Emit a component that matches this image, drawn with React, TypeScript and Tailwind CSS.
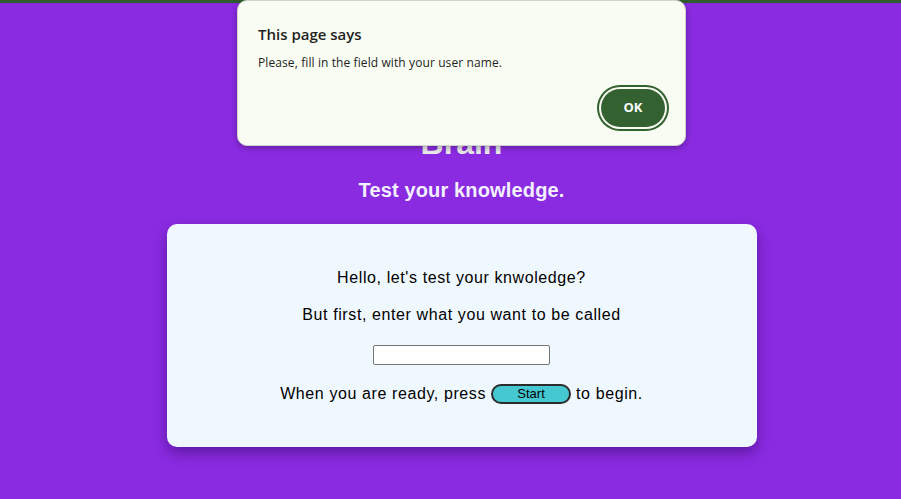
const App = () => {
  return (
    <div className="relative min-h-[499px] w-full overflow-hidden bg-[#8a2be2] font-['Liberation_Sans',Arial,sans-serif]">
      {/* top strip */}
      <div className="h-[3px] w-full bg-[#2f5d2f]" />

      {/* page content */}
      <div className="flex flex-col items-center pl-[22px]">
        <h1 className="mt-[122px] text-[32px] leading-[37px] font-bold text-[#ececec]">
          Brain
        </h1>
        <h2 className="mt-[17px] text-[20px] leading-[23px] font-bold tracking-[0.15px] text-[#f3f0ff]">
          Test your knowledge.
        </h2>

        <div className="mt-[22px] flex w-[590px] flex-col items-center rounded-[10px] bg-[#f0f8ff] pt-[45px] pb-[43px] text-[16px] tracking-[0.6px] text-black shadow-[0_6px_14px_rgba(40,0,80,0.45)]">
          <p className="leading-[18px]">Hello, let's test your knwoledge?</p>
          <p className="mt-[19px] leading-[18px]">
            But first, enter what you want to be called
          </p>
          <input
            type="text"
            className="mt-[21px] h-[20px] w-[177px] rounded-[2px] border border-[#767676] bg-white px-1 text-[13px] outline-none"
          />
          <div className="mt-[19px] flex h-[20px] items-center gap-[5px] leading-[18px]">
            <span>When you are ready, press</span>
            <button className="h-[20px] w-[80px] rounded-[10px] border-2 border-[#2b2b2b] bg-[#45c8d1] text-[13px] leading-[14px] tracking-normal text-black">
              Start
            </button>
            <span>to begin.</span>
          </div>
        </div>
      </div>

      {/* browser alert */}
      <div className="absolute top-0 left-[237px] h-[146px] w-[449px] rounded-[10px] border border-[#cfd3cb] bg-[#f9fcf2] px-[20px] pt-[23px] font-['Open_Sans','Noto_Sans',sans-serif] text-[#1f1f1f] shadow-[0_2px_6px_rgba(0,0,0,0.3)]">
        <div className="text-[15px] leading-[20px] font-semibold">This page says</div>
        <div className="mt-[11px] text-[12px] leading-[16px] tracking-[0.1px]">
          Please, fill in the field with your user name.
        </div>
        <div className="mt-[18px] flex justify-end">
          <button className="h-[38px] w-[64px] rounded-full bg-[#33612f] text-[13px] font-bold text-white shadow-[0_0_0_2px_#f9fcf2,0_0_0_4px_#33612f]">
            OK
          </button>
        </div>
      </div>
    </div>
  );
};

export default App;
